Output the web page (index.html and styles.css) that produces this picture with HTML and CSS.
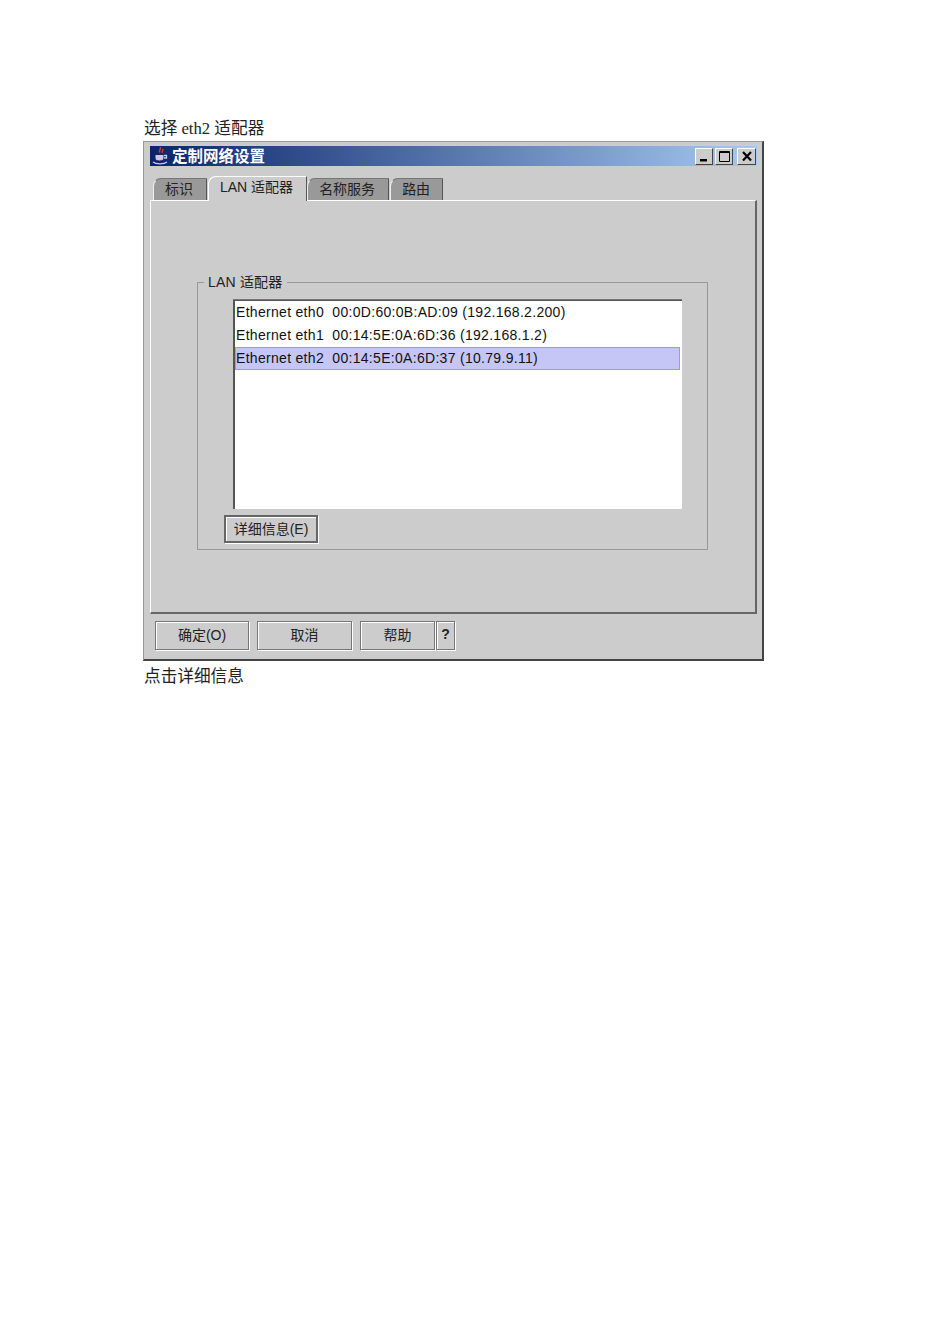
FILE: index.html
```html
<!DOCTYPE html>
<html lang="zh-CN">
<head>
  <meta charset="UTF-8" />
  <title>定制网络设置</title>
  <link rel="stylesheet" href="styles.css">
</head>
<body>
  <p class="caption first">选择 eth2 适配器</p>

  <div class="window">
    <div class="titlebar">
      <svg class="java-icon" width="18" height="18" viewBox="0 0 18 18">
        <path d="M9 0c2 2-2 3 0 5.500M11.500 2c1 1.500-1 2.500 0 4" fill="none" stroke="#e03020" stroke-width="1.5"/>
        <path d="M4 7.500h9v3.500c0 2-2 3-4.500 3S4 13 4 11z" fill="#c8c8e4" stroke="#20205a"/>
        <path d="M13 8.500h2.500v2.500h-2.500M2 15c3 2.500 11 2.500 14 0" fill="none" stroke="#c8c8e8" stroke-width="1.300"/>
      </svg>
      <span class="title-text">定制网络设置</span>
      <div class="win-buttons">
        <span class="win-btn"><svg width="16" height="15" viewBox="0 0 16 15"><path d="M4 10h7v2.500H4z" fill="#000"/></svg></span>
        <span class="win-btn max-btn"><svg width="16" height="15" viewBox="0 0 16 15"><path d="M3.500 2.500h10v10h-10zM3 3.500h11" fill="none" stroke="#000"/></svg></span>
        <span class="win-btn close-btn"><svg width="16" height="15" viewBox="0 0 16 15"><path d="M4 3l8 8.500M12 3l-8 8.500" stroke="#000" stroke-width="2.200"/></svg></span>
      </div>
    </div>

    <div class="tabs">
      <div class="tab">标识</div>
      <div class="tab active">LAN 适配器</div>
      <div class="tab">名称服务</div>
      <div class="tab last">路由</div>
    </div>

    <div class="panel">
      <fieldset class="group">
        <legend>LAN 适配器</legend>
        <ul class="adapter-list">
          <li>Ethernet eth0&nbsp; 00:0D:60:0B:AD:09 (192.168.2.200)</li>
          <li>Ethernet eth1&nbsp; 00:14:5E:0A:6D:36 (192.168.1.2)</li>
          <li class="selected">Ethernet eth2&nbsp; 00:14:5E:0A:6D:37 (10.79.9.11)</li>
        </ul>
        <button class="btn details">详细信息(E)</button>
      </fieldset>
    </div>

    <div class="footer">
      <button class="btn ok">确定(O)</button>
      <button class="btn cancel">取消</button>
      <button class="btn help">帮助</button>
      <button class="btn question">?</button>
    </div>
  </div>

  <p class="caption last">点击详细信息</p>
</body>
</html>
```

FILE: styles.css
```css
html, body {
  margin: 0;
  padding: 0;
  background: #fff;
}

body {
  width: 950px;
  height: 1344px;
  padding: 119px 0 0 144px;
  box-sizing: border-box;
  overflow: hidden;
  font-family: "Liberation Serif", "Noto Sans CJK SC", serif;
  color: #222;
}

.caption {
  margin: 0;
  height: 20px;
  font-size: 16.67px;
  line-height: 20px;
}

.caption.first {
  height: 22px;
}

.caption.last {
  margin-top: 6px;
}

.window {
  width: 621px;
  height: 520px;
  margin-left: -1px;
  box-sizing: border-box;
  padding: 4px 5px 0 6px;
  background: #ccc;
  border-top: 1px solid #999;
  border-left: 1px solid #999;
  border-right: 2px solid #444;
  border-bottom: 2px solid #444;
  font-family: "Liberation Sans", "Noto Sans CJK SC", sans-serif;
  font-size: 14px;
  color: #111;
  display: flex;
  flex-direction: column;
}

.titlebar {
  height: 20px;
  flex: none;
  display: flex;
  align-items: center;
  background: linear-gradient(to right, #0a246a, #a6caf0);
}

.java-icon {
  margin-left: 1px;
  flex: none;
}

.title-text {
  margin-left: 3px;
  margin-top: -2px;
  color: #fff;
  font-size: 15.5px;
  font-weight: 700;
}

.win-buttons {
  margin-left: auto;
  margin-right: 1px;
  display: flex;
}

.win-btn {
  width: 18px;
  height: 17px;
  background: #ccc;
  border: 1px solid;
  border-color: #fff #444 #444 #fff;
  box-sizing: border-box;
  display: flex;
  align-items: center;
  justify-content: center;
}

.max-btn {
  margin-left: 2px;
}

.close-btn {
  width: 19px;
  margin-left: 4px;
}

.tabs {
  height: 24px;
  margin-top: 10px;
  padding-left: 3px;
  flex: none;
  display: flex;
  align-items: flex-end;
}

.tab {
  height: 22px;
  padding: 0 13px 0 11px;
  margin-right: 1px;
  box-sizing: border-box;
  background: #999;
  border-top: 1px solid #777;
  border-right: 1px solid #555;
  border-left: 1px solid #eee;
  border-top-left-radius: 8px 8px;
  font-size: 14px;
  line-height: 20px;
  color: #222;
  white-space: nowrap;
}

.tab.last {
  padding-right: 12px;
}

.tab.active {
  position: relative;
  z-index: 1;
  height: 25px;
  margin-right: 0;
  margin-bottom: -1px;
  background: #ccc;
  border-top-color: #fff;
  border-left-color: #fff;
  line-height: 21px;
}

.panel {
  height: 414px;
  flex: none;
  box-sizing: border-box;
  padding: 73px 47px 0 46px;
  background: #ccc;
  border-top: 1px solid #fff;
  border-left: 1px solid #fff;
  border-right: 2px solid #666;
  border-bottom: 2px solid #666;
}

.group {
  height: 276px;
  margin: 0;
  padding: 10px 25px 0 26px;
  box-sizing: border-box;
  border: 1px solid #999;
  min-width: 0;
}

.group legend {
  margin-left: -20px;
  padding: 0 4px 0 4px;
  font-size: 14px;
  line-height: 16px;
  letter-spacing: 0.2px;
  color: #222;
}

.adapter-list {
  list-style: none;
  margin: 0 0 0 9px;
  padding: 0 2px 0 1px;
  width: 449px;
  height: 209px;
  box-sizing: border-box;
  background: #fff;
  border-top: 1px solid #555;
  border-left: 2px solid #555;
  box-shadow: 0 -1px 0 #777;
}

.adapter-list li {
  height: 23px;
  box-sizing: border-box;
  line-height: 22px;
  font-size: 14px;
  letter-spacing: 0.3px;
  white-space: nowrap;
}

.adapter-list li.selected {
  margin-left: -1px;
  background: #c6c6f6;
  border: 1px solid #9a9ae0;
  line-height: 20px;
}

.btn {
  margin: 0;
  padding: 0 0 3px;
  height: 29px;
  box-sizing: border-box;
  background: #ccc;
  border: 1px solid #777;
  box-shadow: inset 1px 1px 0 #fff, 1px 1px 0 #fff;
  font-family: "Liberation Sans", "Noto Sans CJK SC", sans-serif;
  font-size: 14px;
  color: #222;
}

.details {
  display: block;
  width: 94px;
  height: 28px;
  margin-top: 6px;
  border: 2px solid #666;
}

.footer {
  display: flex;
  padding: 7px 0 0 5px;
}

.ok { width: 94px; }
.cancel { width: 95px; margin-left: 8px; }
.help { width: 75px; margin-left: 8px; }
.question { width: 19px; margin-left: 1px; font-weight: 700; }
```
